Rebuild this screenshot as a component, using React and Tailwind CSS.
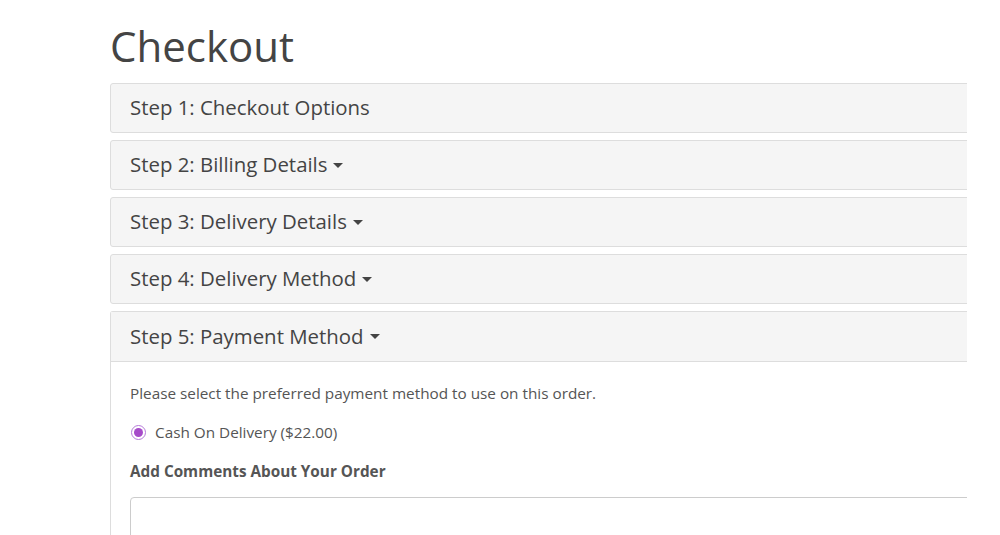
import React from 'react';

const steps = [
  { title: 'Step 1: Checkout Options', caret: false },
  { title: 'Step 2: Billing Details', caret: true },
  { title: 'Step 3: Delivery Details', caret: true },
  { title: 'Step 4: Delivery Method', caret: true },
];

function Caret() {
  return (
    <svg width="10" height="6" viewBox="0 0 10 6" className="ml-[6px] mt-[2px] inline-block">
      <path d="M0 0 L10 0 L5 5 Z" fill="#444" />
    </svg>
  );
}

export default function App() {
  return (
    <div className="h-[535px] bg-white text-[#444] font-['Open_Sans',sans-serif] overflow-hidden">
      {/* the shot is cropped at the right edge, so panels run on past it */}
      <div className="ml-[110px] w-[857px] h-full overflow-hidden">
        <h1 className="text-[42px] leading-none pt-[25px] pb-[16px] text-[#444]">Checkout</h1>

        <div className="w-[1000px] flex flex-col gap-[7px]">
          {steps.map((s) => (
            <div
              key={s.title}
              className="h-[50px] bg-[#f5f5f5] border border-[#ddd] rounded-[3px] flex items-center pl-[19px] pb-[1px]"
            >
              <span className="text-[20.4px] text-[#444]">{s.title}</span>
              {s.caret && <Caret />}
            </div>
          ))}

          <div className="border border-[#ddd] rounded-t-[3px] border-b-0">
            <div className="h-[50px] bg-[#f5f5f5] border-b border-[#ddd] flex items-center pl-[19px] pb-[1px]">
              <span className="text-[20.4px] text-[#444]">Step 5: Payment Method</span>
              <Caret />
            </div>
            <div className="pl-[19px] pt-[20px]">
              <p className="text-[15.3px] text-[#555]">Please select the preferred payment method to use on this order.</p>
              <label className="flex items-center mt-[16px] text-[15.3px] text-[#555]">
                <span className="w-[15px] h-[15px] rounded-full border border-[#b57ad9] bg-white flex items-center justify-center ml-[1px]">
                  <span className="w-[9px] h-[9px] rounded-full bg-[#a64bc9]" />
                </span>
                <span className="ml-[9px]">Cash On Delivery ($22.00)</span>
              </label>
              <p className="text-[15.3px] font-bold text-[#555] mt-[16px]">Add Comments About Your Order</p>
              <div className="mt-[14px] h-[80px] border border-[#ccc] rounded-[4px] bg-white" />
            </div>
          </div>
        </div>
      </div>
    </div>
  );
}
